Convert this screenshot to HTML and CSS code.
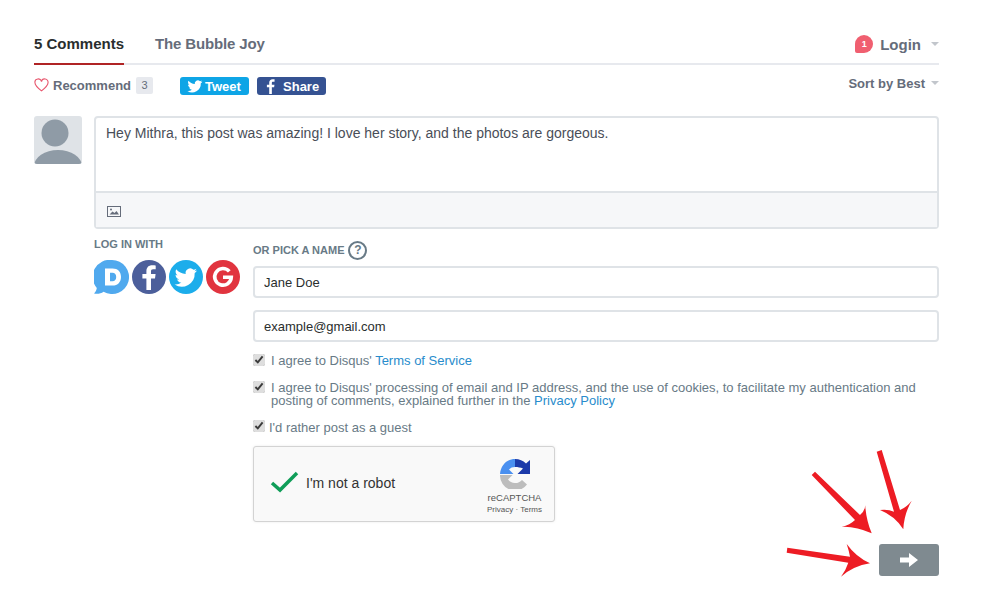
FILE: index.html
```html
<!DOCTYPE html>
<html lang="en">
<head>
    <meta charset="UTF-8">
    <meta name="viewport" content="width=device-width, initial-scale=1.0">
    <title>5 Comments</title>
    <link rel="stylesheet" href="styles.css">
</head>
<body>
    <div class="thread">
        <nav class="tabs">
            <a class="tab tab-active">5 Comments</a>
            <a class="tab tab-site">The Bubble Joy</a>
            <div class="login">
                <span class="bubble">1</span>
                <span>Login</span>
                <span class="caret"></span>
            </div>
        </nav>

        <div class="actions">
            <svg class="heart" viewBox="0 0 16 15" width="15" height="14"><path d="M8 13.8C3.5 10.2 1 7.9 1 5a3.5 3.5 0 0 1 7-1 3.5 3.5 0 0 1 7 1c0 2.900-2.500 5.200-7 8.800z" fill="none" stroke="#e8586f" stroke-width="1.200"/></svg>
            <span class="recommend">Recommend</span>
            <span class="count">3</span>
            <a class="share share-tw">
                <svg viewBox="0 0 24 24" width="16" height="16"><path fill="#fff" d="M23 5.500c-.8.400-1.700.6-2.600.7.900-.6 1.600-1.400 2-2.500-.9.500-1.900.9-2.900 1.100A4.600 4.600 0 0 0 11.700 9C7.900 8.800 4.500 7 2.200 4.200c-1.200 2.100-.6 4.800 1.400 6.100-.7 0-1.400-.2-2.100-.6 0 2.200 1.600 4.100 3.700 4.600-.7.200-1.400.2-2.100.1.600 1.800 2.300 3.100 4.300 3.200A9.300 9.300 0 0 1 .6 19.500 13 13 0 0 0 20.700 8c.9-.6 1.700-1.500 2.300-2.500z"/></svg>
                <span>Tweet</span>
            </a>
            <a class="share share-fb">
                <svg viewBox="0 0 12 20" width="9" height="15"><path fill="#fff" d="M7.800 20v-9h3l.5-3.500H7.800V5.300c0-1 .3-1.700 1.700-1.700h1.900V.4C11 .3 10 .2 8.800.2 6.100.2 4.300 1.800 4.300 4.800v2.700H1.200V11h3.100v9z"/></svg>
                <span>Share</span>
            </a>
            <div class="sort">
                <span>Sort by Best</span>
                <span class="caret"></span>
            </div>
        </div>

        <div class="composer">
            <div class="avatar">
                <svg viewBox="0 0 48 48" width="48" height="48">
                    <circle cx="21" cy="17" r="13.500" fill="#8f9ba6"/>
                    <ellipse cx="24" cy="50" rx="24" ry="16" fill="#8f9ba6"/>
                </svg>
            </div>
            <div class="editor">
                <div class="editor-text">Hey Mithra, this post was amazing! I love her story, and the photos are gorgeous.</div>
                <div class="editor-tools">
                    <svg viewBox="0 0 14 11" width="14" height="11">
                        <rect x=".5" y=".5" width="13" height="10" fill="none" stroke="#656c7a"/>
                        <path d="M2.500 8.500l3-3 2 1.500 2-2 2.500 3.500z" fill="#656c7a"/>
                        <circle cx="4" cy="3.500" r="1" fill="#656c7a"/>
                    </svg>
                </div>
            </div>
        </div>

        <div class="guest">
            <div class="social">
                <div class="label">LOG IN WITH</div>
                <div class="social-icons">
                    <svg class="social-icon social-disqus" viewBox="0 0 35 34">
                        <path fill="#50a9ee" d="M18 0a17 17 0 1 1-8.500 31.700C7 33.500 3.500 34.300 0 33.500c1.600-1.400 2.500-3.400 2.800-5.500A17 17 0 0 1 18 0z"/>
                        <path fill="#fff" fill-rule="evenodd" d="M11 8.500h7.500c5.400 0 8.500 3.500 8.500 8.400s-3.100 8.600-8.500 8.600H11zm5 4.200v8.600h2.300c2.700 0 3.900-2 3.900-4.400s-1.200-4.200-3.900-4.200z"/>
                    </svg>
                    <svg class="social-icon" viewBox="0 0 34 34">
                        <circle cx="17" cy="17" r="17" fill="#4c5f9b"/>
                        <path fill="#fff" d="M19 30V18.500h4l.6-4.500H19v-2.500c0-1.300.4-2.200 2.200-2.200h2.500V5.400c-.5-.1-1.900-.2-3.500-.2-3.500 0-5.800 2.100-5.800 6V14h-4v4.500h4V30z"/>
                    </svg>
                    <svg class="social-icon" viewBox="0 0 34 34">
                        <circle cx="17" cy="17" r="17" fill="#1cadeb"/>
                        <path fill="#fff" d="M28 10.500c-.8.400-1.700.6-2.600.7.900-.6 1.600-1.400 2-2.500-.9.500-1.900.9-2.900 1.100a4.600 4.600 0 0 0-7.800 4.200C12.900 13.800 9.500 12 7.200 9.200c-1.200 2.100-.6 4.800 1.400 6.100-.7 0-1.400-.2-2.100-.6 0 2.200 1.600 4.100 3.700 4.600-.7.200-1.400.2-2.100.1.600 1.800 2.300 3.100 4.300 3.200a9.300 9.300 0 0 1-6.800 1.900A13 13 0 0 0 25.700 13c.9-.6 1.700-1.500 2.300-2.500z"/>
                    </svg>
                    <svg class="social-icon" viewBox="0 0 34 34">
                        <circle cx="17" cy="17" r="17" fill="#e1343f"/>
                        <path fill="none" stroke="#fff" stroke-width="3.600" d="M23.300 11.400A8.300 8.300 0 1 0 25.300 17.200H17"/>
                    </svg>
                </div>
            </div>
            <div class="pick">
                <div class="label label-pick">
                    <span>OR PICK A NAME</span>
                    <span class="help">?</span>
                </div>
                <input class="field" type="text" value="Jane Doe">
                <input class="field" type="text" value="example@gmail.com">
                <label class="check check-first">
                    <input type="checkbox" checked>
                    <span>I agree to Disqus' <a>Terms of Service</a></span>
                </label>
                <label class="check">
                    <input type="checkbox" checked>
                    <span>I agree to Disqus' processing of email and IP address, and the use of cookies, to facilitate my authentication and posting of comments, explained further in the <a>Privacy Policy</a></span>
                </label>
                <label class="check check-guest">
                    <input type="checkbox" checked>
                    <span>I'd rather post as a guest</span>
                </label>
                <div class="captcha">
                    <svg class="captcha-tick" viewBox="0 0 30 22" width="30" height="22"><path d="M2 12l8 7L27 2" fill="none" stroke="#0f9d58" stroke-width="3.500"/></svg>
                    <span class="captcha-text">I'm not a robot</span>
                    <div class="captcha-brand">
                        <svg viewBox="0 0 30 30" width="30" height="30">
                            <path fill="#4a90f0" d="M0 15C1 6 7 0 15 0v8c-2.500 0-4.500.8-6 2.500l4.500 4.500z"/>
                            <path fill="#1c3aa9" d="M15 0c4.500 0 8 1.500 11 4.500L30 1v14H17.500l5.500-5.500C20.500 8.500 18 8 15 8z"/>
                            <path fill="#bdbdbd" d="M0 16H12.500L8 20.500A9 9 0 0 0 22 21L27 25.500A15 15 0 0 1 0 16z"/>
                        </svg>
                        <div class="captcha-name">reCAPTCHA</div>
                        <div class="captcha-links">Privacy · Terms</div>
                    </div>
                </div>
            </div>
        </div>

        <div class="submit-row">
            <button class="submit">
                <svg viewBox="0 0 18 14" width="18" height="14"><path fill="#fff" d="M0 4.500h9V0l9 7-9 7V9.500H0z"/></svg>
            </button>
        </div>
    </div>

    <!-- arrows drawn on top of the screenshot -->
    <svg class="arrows" viewBox="0 0 1000 600" width="1000" height="600">
        <path fill="#ed1c24" d="M811.700 475L815 471.700L860 515Q866 510 865 503.300Q866 520 871.700 533.300Q856 526 841.700 526.700Q850 525 855 520Z"/>
        <path fill="#ed1c24" d="M876.700 451.700L881.700 450L900 510Q907 507 911.700 500.700Q904 514 903.300 529.300Q895 516 880 510Q888 509 894 511.700Z"/>
        <path fill="#ed1c24" d="M787.300 547.700L786.700 552.700L848.300 562.700Q846 570 841 576.700Q853 566 870 563.300Q856 557 846.700 544Q849 551 850 556.700Z"/>
    </svg>
</body>
</html>
```
FILE: styles.css
```css
body {
    margin: 0;
    font-family: "Liberation Sans", Arial, sans-serif;
    background-color: #fff;
    color: #2a2e2e;
}
.thread {
    padding: 30px 61px 0 34px;
}
.tabs {
    display: flex;
    align-items: flex-end;
    height: 33px;
    border-bottom: 2px solid #e7e9ee;
    font-size: 15px;
    font-weight: bold;
}
.tab {
    padding-bottom: 11px;
    margin-right: 31px;
    margin-bottom: -2px;
    color: #656c7a;
    border-bottom: 2px solid transparent;
}
.tab-active {
    color: #2a2e2e;
    border-bottom-color: #b02425;
}
.tab-site {
    letter-spacing: -0.15px;
}
.login {
    margin-left: auto;
    display: flex;
    align-items: center;
    padding-bottom: 10px;
    color: #656c7a;
}
.bubble {
    width: 18px;
    height: 18px;
    margin-right: 7px;
    border-radius: 50% 50% 50% 2px;
    background-color: #f05f70;
    color: #fff;
    font-size: 9px;
    line-height: 18px;
    text-align: center;
}
.caret {
    width: 0;
    height: 0;
    margin-left: 10px;
    border-left: 4px solid transparent;
    border-right: 4px solid transparent;
    border-top: 4px solid #c2c6cc;
}
.actions {
    display: flex;
    align-items: center;
    height: 22px;
    margin-top: 9px;
    font-size: 13px;
    font-weight: bold;
    color: #656c7a;
}
.heart {
    margin-right: 4px;
}
.recommend {
    margin-right: 5px;
}
.count {
    width: 17px;
    height: 17px;
    background-color: #e7e9ee;
    border-radius: 2px;
    font-size: 11px;
    font-weight: normal;
    line-height: 17px;
    text-align: center;
}
.share {
    display: flex;
    align-items: center;
    width: 69px;
    height: 18px;
    margin-top: 2px;
    box-sizing: border-box;
    border-radius: 3px;
    color: #fff;
}
.share-tw {
    gap: 2px;
    padding-left: 7px;
    margin-left: 27px;
    background-color: #0ea5e6;
}
.share-fb {
    gap: 8px;
    padding-left: 9px;
    margin-left: 8px;
    background-color: #355292;
}
.sort {
    margin-left: auto;
    margin-bottom: 4px;
    display: flex;
    align-items: center;
    font-size: 13px;
}
.sort .caret {
    margin-left: 6px;
}
.composer {
    display: flex;
    gap: 12px;
    margin-top: 20px;
}
.avatar {
    width: 48px;
    height: 48px;
    background-color: #dfe3e7;
    border-radius: 3px;
    overflow: hidden;
}
.editor {
    flex: 1;
    border: 2px solid #dfe3e7;
    border-radius: 4px;
}
.editor-text {
    height: 75px;
    padding: 7px 10px;
    box-sizing: border-box;
    font-size: 14px;
    line-height: 16px;
    color: #494e58;
    border-bottom: 2px solid #dfe3e7;
}
.editor-tools {
    display: flex;
    align-items: center;
    height: 34px;
    padding: 3px 11px 0;
    box-sizing: border-box;
    background-color: #f6f7f9;
}
.guest {
    display: flex;
    padding-left: 60px;
}
.social {
    width: 159px;
    padding-top: 9px;
}
.label {
    font-size: 11px;
    font-weight: bold;
    line-height: 12px;
    color: #687a86;
}
.social-icons {
    display: flex;
    gap: 3px;
    margin-top: 10px;
}
.social-icon {
    width: 34px;
    height: 34px;
}
.social-disqus {
    width: 35px;
}
.pick {
    flex: 1;
}
.label-pick {
    display: flex;
    align-items: center;
    gap: 4px;
    height: 20px;
    margin-top: 11px;
}
.help {
    width: 15px;
    height: 15px;
    border: 2px solid #687a86;
    border-radius: 50%;
    font-size: 12px;
    line-height: 15px;
    text-align: center;
}
.field {
    display: block;
    width: 100%;
    height: 32px;
    box-sizing: border-box;
    margin-top: 6px;
    margin-bottom: 12px;
    padding: 0 9px;
    border: 2px solid #dfe3e7;
    border-radius: 4px;
    font-family: inherit;
    font-size: 13px;
    color: #2a2e2e;
}
.check {
    display: flex;
    align-items: flex-start;
    margin-top: 14px;
    font-size: 13px;
    line-height: 13px;
    color: #687a86;
}
.check input {
    width: 12px;
    height: 12px;
    margin: 0 6px 0 0;
    flex-shrink: 0;
    accent-color: #dedede;
}
.check a {
    color: #288ccc;
}
.check-first {
    margin-top: 12px;
}
.check-guest input {
    margin-right: 4px;
    margin-top: -1px;
}
.captcha {
    display: flex;
    align-items: center;
    width: 302px;
    height: 76px;
    box-sizing: border-box;
    margin-top: 12px;
    padding: 0 12px 0 16px;
    background-color: #f9f9f9;
    border: 1px solid #d3d3d3;
    border-radius: 3px;
    box-shadow: 0 0 3px rgba(0, 0, 0, 0.08);
}
.captcha-tick {
    margin-bottom: 4px;
}
.captcha-text {
    margin-left: 6px;
    margin-bottom: 2px;
    font-size: 14px;
    color: #333;
}
.captcha-brand {
    margin-left: auto;
    margin-top: 4px;
    display: flex;
    flex-direction: column;
    align-items: center;
    color: #555;
}
.captcha-name {
    margin-top: 3px;
    font-size: 9.500px;
}
.captcha-links {
    margin-top: 2px;
    font-size: 8px;
}
.submit-row {
    display: flex;
    justify-content: flex-end;
    margin-top: 22px;
}
.submit {
    display: flex;
    align-items: center;
    justify-content: center;
    width: 60px;
    height: 32px;
    border: none;
    border-radius: 3px;
    background-color: #7f8a90;
}
.arrows {
    position: absolute;
    top: 0;
    left: 0;
}
```
